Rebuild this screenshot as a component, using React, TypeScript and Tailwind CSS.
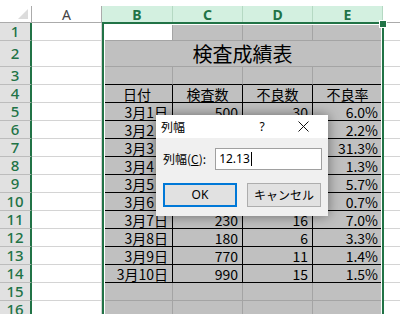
import React from "react";

const jp = { fontFamily: '"Noto Sans CJK JP", "Noto Sans", sans-serif' };
const ui = { fontFamily: '"Noto Sans", "Noto Sans CJK JP", sans-serif' };

type Row = { h: number; cells?: string[]; kind: "blank" | "title" | "head" | "data" };

const data: string[][] = [
  ["3月1日", "500", "30", "6.0%"],
  ["3月2日", "450", "10", "2.2%"],
  ["3月3日", "320", "100", "31.3%"],
  ["3月4日", "800", "10", "1.3%"],
  ["3月5日", "350", "20", "5.7%"],
  ["3月6日", "600", "4", "0.7%"],
  ["3月7日", "230", "16", "7.0%"],
  ["3月8日", "180", "6", "3.3%"],
  ["3月9日", "770", "11", "1.4%"],
  ["3月10日", "990", "15", "1.5%"],
];

const rows: Row[] = [
  { h: 18, kind: "blank" },
  { h: 26, kind: "title" },
  { h: 18, kind: "blank" },
  { h: 18, kind: "head", cells: ["日付", "検査数", "不良数", "不良率"] },
  ...data.map((cells) => ({ h: 18, kind: "data" as const, cells })),
  { h: 18, kind: "blank" },
  { h: 18, kind: "blank" },
];

const widths = [71, 70, 70, 70];

function SheetRow({ row, n }: { row: Row; n: number }) {
  const bottomBlack = n >= 3 && n <= 14;
  return (
    <div className="flex" style={{ height: row.h }}>
      <div className="w-[32px] shrink-0 flex items-center justify-center bg-[#e1e1e1] border-r-2 border-r-[#217346] border-b border-b-[#bcbcbc] text-[15px] font-medium text-[#217346]" style={ui}>
        {n}
      </div>
      <div className="w-[70px] shrink-0 bg-white border-r border-b border-[#d4d4d4]" />
      {row.kind === "title" ? (
        <div className="w-[281px] shrink-0 flex items-center justify-center bg-[#c0c0c0] border-b border-[#a4a4a4] text-[20px] text-black" style={jp}>
          検査成績表
        </div>
      ) : (
        widths.map((w, i) => {
          const white = n === 1 && i === 0;
          const vBlack = n >= 4 && n <= 14;
          return (
            <div
              key={i}
              style={{ width: w, ...jp }}
              className={`shrink-0 flex items-center text-[14px] leading-none text-black border-r border-b ${white ? "bg-white" : "bg-[#c0c0c0]"} ${vBlack ? "border-r-black" : "border-r-[#a4a4a4]"} ${bottomBlack ? "border-b-black" : "border-b-[#a4a4a4]"} ${row.kind === "head" ? "justify-center" : "justify-end pr-[4px]"}`}
            >
              {row.cells ? row.cells[i] : null}
            </div>
          );
        })
      )}
      <div className="flex-1 bg-white border-b border-[#d4d4d4]" />
    </div>
  );
}

function Dialog() {
  return (
    <div className="absolute left-[156px] top-[115px] w-[172px] h-[101px] bg-[#f0f0f0] shadow-[0_0_12px_rgba(0,0,0,0.45)] flex flex-col" style={jp}>
      <div className="h-[23px] bg-white flex items-center pl-[5px] text-[12px] text-black">
        <span className="flex-1">列幅</span>
        <span className="w-[20px] text-center mr-[26px] text-[12px]" style={ui}>?</span>
        <svg width="11" height="11" viewBox="0 0 11 11" className="mr-[19px]">
          <path d="M0.5 0.5 L10.5 10.5 M10.5 0.5 L0.5 10.5" stroke="#111" strokeWidth="1" />
        </svg>
      </div>
      <div className="flex items-center mt-[10px] pl-[7px] pr-[6px] gap-[9px]">
        <span className="text-[12px] text-black whitespace-nowrap">
          列幅(<span className="underline">C</span>):
        </span>
        <div className="flex-1 h-[22px] bg-white border border-[#a0a0a0] flex items-center pl-[3px] text-[12px] text-black" style={ui}>
          12.13
          <span className="inline-block w-[1px] h-[14px] bg-black ml-[1px]" />
        </div>
      </div>
      <div className="flex mt-[13px] pl-[7px] gap-[10px]">
        <button className="w-[74px] h-[24px] bg-[#e1e1e1] border-2 border-[#0078d7] text-[12px] text-black" style={ui}>
          OK
        </button>
        <button className="w-[74px] h-[24px] bg-[#e1e1e1] border border-[#adadad] text-[12px] text-black" style={jp}>
          キャンセル
        </button>
      </div>
    </div>
  );
}

export default function App() {
  return (
    <div className="relative w-[400px] h-[314px] overflow-hidden bg-white">
      <div className="h-[6px] bg-white" />
      <div className="flex h-[17px]" style={ui}>
        <div className="relative w-[32px] shrink-0 bg-white border-r border-b border-[#ababab]">
          <div className="absolute right-[3px] bottom-[3px] w-0 h-0 border-l-[10px] border-l-transparent border-b-[10px] border-b-[#dcdcdc]" />
        </div>
        <div className="w-[70px] shrink-0 bg-white border-r border-b border-[#ababab] flex items-center justify-center text-[14px] text-[#444]">
          A
        </div>
        {["B", "C", "D", "E"].map((c, i) => (
          <div
            key={c}
            style={{ width: widths[i] }}
            className="shrink-0 bg-[#d3f0e0] border-r border-[#b5d9c3] flex items-center justify-center text-[14px] font-bold text-[#217346]"
          >
            {c}
          </div>
        ))}
        <div className="flex-1 bg-white border-b border-[#ababab]" />
      </div>
      {rows.map((r, i) => (
        <SheetRow key={i} row={r} n={i + 1} />
      ))}
      <div className="absolute left-[102px] top-[22px] w-[282px] h-[320px] border-2 border-[#217346] shadow-[inset_0_0_0_1px_#fff] pointer-events-none" />
      <div className="absolute left-[380px] top-[21px] w-[6px] h-[6px] bg-[#217346] outline outline-1 outline-white" />
      <Dialog />
    </div>
  );
}
